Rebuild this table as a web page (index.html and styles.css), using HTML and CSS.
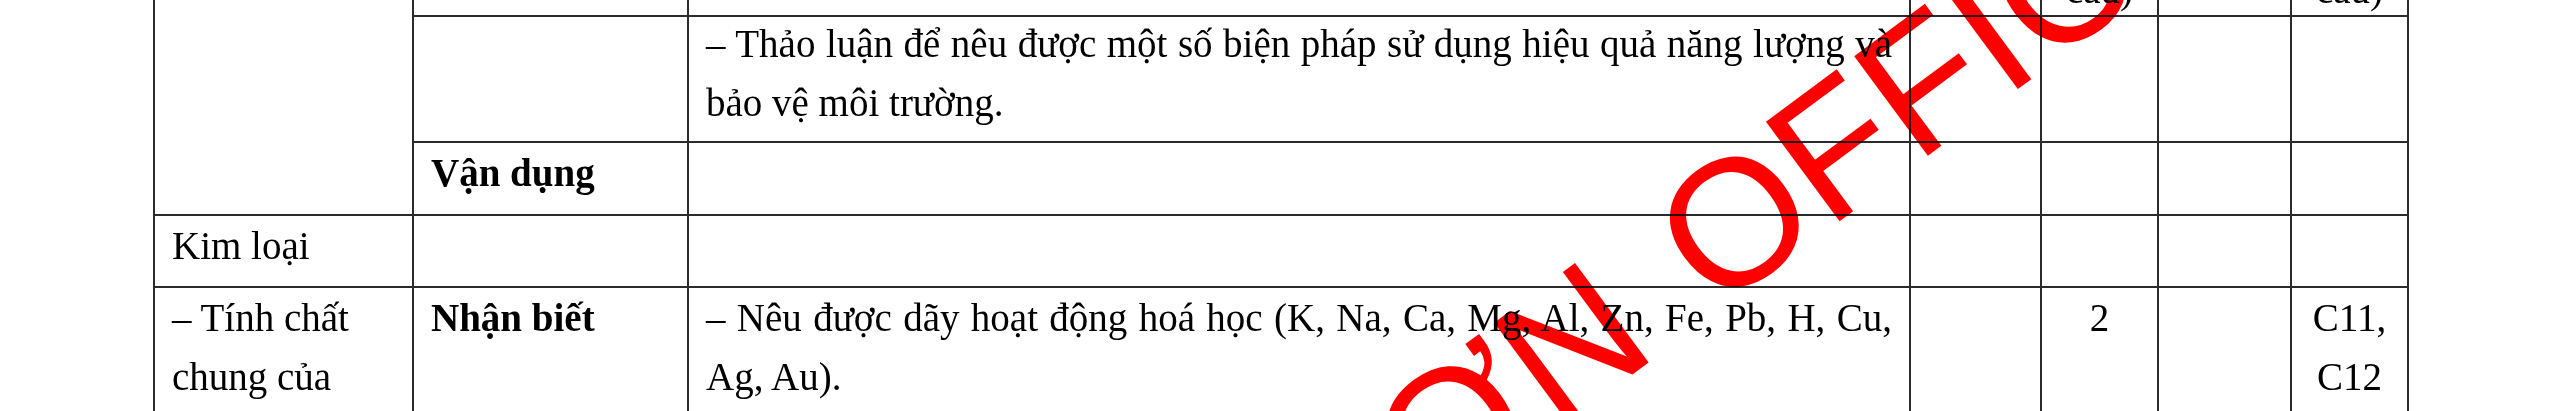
FILE: index.html
```html
<!DOCTYPE html>
<html lang="vi">
<head>
    <meta charset="UTF-8">
    <title>Ma trận đề kiểm tra</title>
    <link rel="stylesheet" href="styles.css">
</head>
<body>
    <div class="sheet">
        <table class="matrix">
            <colgroup>
                <col class="c-topic">
                <col class="c-level">
                <col class="c-goal">
                <col class="c-num">
                <col class="c-num2">
                <col class="c-num3">
                <col class="c-num2">
            </colgroup>
            <tr class="head-row">
                <td rowspan="3"></td>
                <td></td>
                <td></td>
                <td></td>
                <td class="center">(Số câu)</td>
                <td></td>
                <td class="center">(Số câu)</td>
            </tr>
            <tr>
                <td></td>
                <td class="goal first"><div class="lift">– Thảo luận để nêu được một số biện pháp sử dụng hiệu quả năng lượng và bảo vệ môi trường.</div></td>
                <td></td>
                <td></td>
                <td></td>
                <td></td>
            </tr>
            <tr>
                <td class="level">Vận dụng</td>
                <td class="goal"></td>
                <td></td>
                <td></td>
                <td></td>
                <td></td>
            </tr>
            <tr>
                <td>Kim loại</td>
                <td></td>
                <td class="goal"></td>
                <td></td>
                <td></td>
                <td></td>
                <td></td>
            </tr>
            <tr>
                <td>– Tính chất chung của</td>
                <td class="level">Nhận biết</td>
                <td class="goal">– Nêu được dãy hoạt động hoá học (K, Na, Ca, Mg, Al, Zn, Fe, Pb, H, Cu, Ag, Au).</td>
                <td></td>
                <td class="center">2</td>
                <td></td>
                <td class="center">C11, C12</td>
            </tr>
        </table>

        <!-- watermark over the page -->
        <div class="watermark">SƠN OFFICE</div>
    </div>
</body>
</html>
```

FILE: styles.css
```css
body {
    margin: 0;
    background: #fff;
    color: #000;
    font-family: "Liberation Serif", "Times New Roman", serif;
    font-size: 39px;
    line-height: 58.5px;
}
.sheet {
    position: relative;
    height: 411px;
    overflow: hidden;
    padding-left: 153px;
}
.matrix {
    border-collapse: collapse;
    table-layout: fixed;
    width: 2256px;
    margin-top: -87px;
}
.c-topic { width: 259px; }
.c-level { width: 275px; }
.c-goal { width: 1222px; }
.c-num { width: 131px; }
.c-num2 { width: 117px; }
.c-num3 { width: 133px; }
.matrix td {
    border: 2px solid #2b2b2b;
    padding: 1px 17px 11px;
    vertical-align: top;
    text-align: left;
}
.matrix td.goal {
    text-align: justify;
}
.matrix td.first {
    padding-top: 0;
    padding-bottom: 9px;
}
.matrix td.level {
    font-weight: bold;
}
.matrix td.center {
    text-align: center;
}
.head-row td {
    padding-top: 0;
    padding-bottom: 0;
    line-height: 50px;
    height: 100px;
}
.lift {
    margin-top: -2px;
}
.watermark {
    position: absolute;
    left: 1245px;
    top: 472px;
    transform: rotate(-36.5deg);
    transform-origin: 0 0;
    font-family: "Liberation Sans", Arial, sans-serif;
    font-size: 180px;
    line-height: 1;
    word-spacing: 18px;
    white-space: nowrap;
    color: #ff0000;
    mix-blend-mode: multiply;
    pointer-events: none;
}
```
